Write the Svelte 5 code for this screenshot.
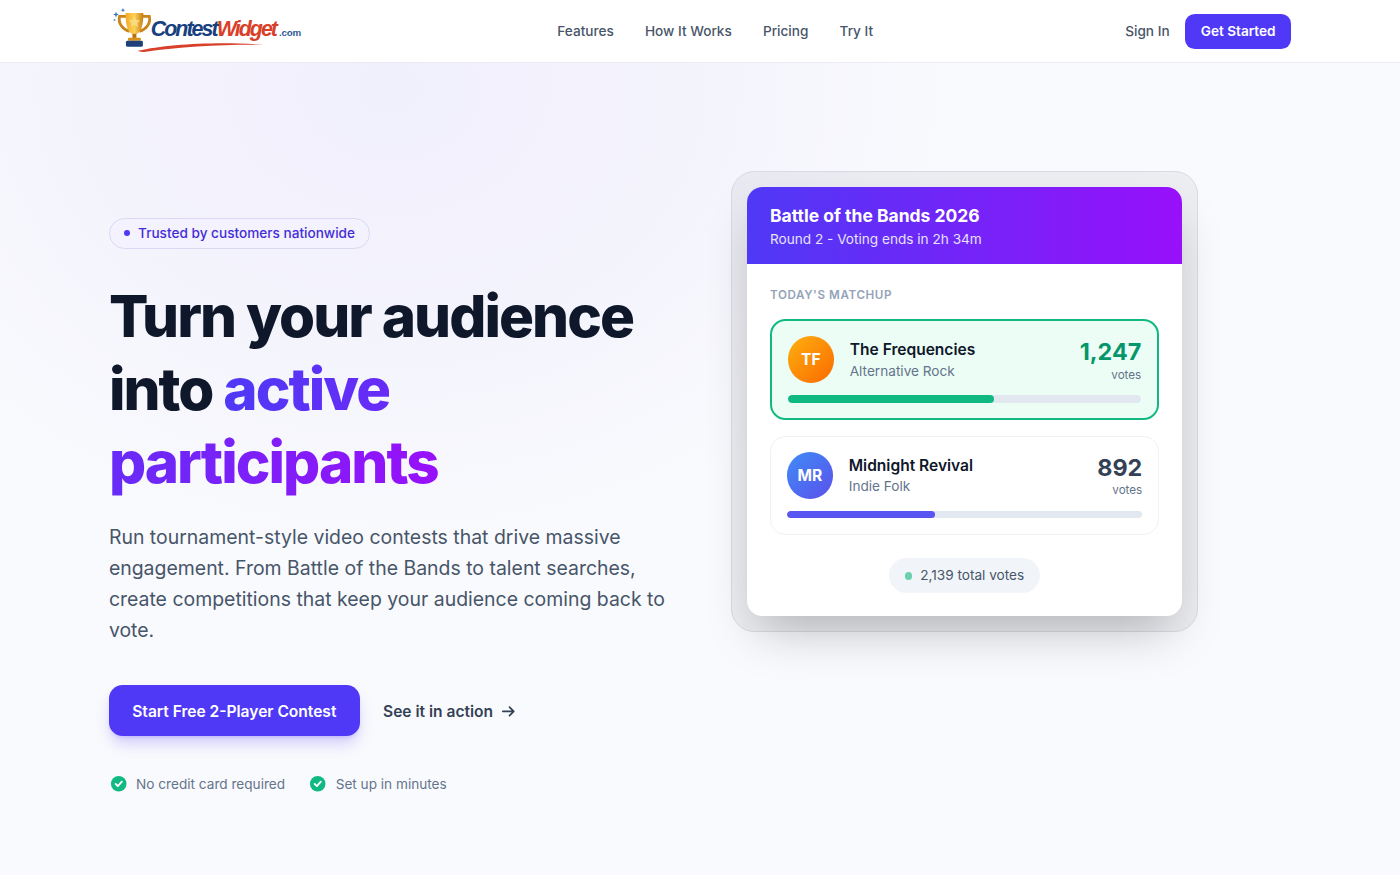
<script>
  const navLinks = ['Features', 'How It Works', 'Pricing', 'Try It'];
  const perks = ['No credit card required', 'Set up in minutes'];
  const contestants = [
    { initials: 'TF', name: 'The Frequencies', genre: 'Alternative Rock', votes: 1247, tone: 'orange', leader: true },
    { initials: 'MR', name: 'Midnight Revival', genre: 'Indie Folk', votes: 892, tone: 'blue', leader: false }
  ];
  const total = contestants.reduce((sum, c) => sum + c.votes, 0);
</script>

<div class="page">
  <header class="nav">
    <a class="logo" href="#top">
      <svg class="trophy" viewBox="0 0 40 42" width="41" height="43" aria-hidden="true">
        <path d="M3 3.500l.8 2.200 2.200.8-2.200.8L3 9.500l-.8-2.200L0 6.500l2.200-.8z" fill="#3c6fb0" />
        <path d="M10 0l.6 1.600 1.600.6-1.600.6-.6 1.600-.6-1.600-1.600-.6 1.600-.6z" fill="#3c6fb0" />
        <circle cx="1.500" cy="12" r="1" fill="#6d93c4" />
        <path d="M14 8.500H6.500c-1.500 7 3 13 10 15M29 8.500h7.500c1.500 7-3 13-10 15" fill="none" stroke="#c9851a" stroke-width="2.800" />
        <path d="M12.500 5h18c0 11-2 21-9 22-7-1-9-11-9-22z" fill="url(#cup)" />
        <path d="M21.500 8.500l1.700 3.600 3.900.5-2.900 2.700.8 3.900-3.500-2-3.500 2 .8-3.900-2.900-2.700 3.900-.5z" fill="#f9dc7f" />
        <rect x="19.500" y="26" width="4" height="5" fill="#b8720f" />
        <rect x="15" y="30" width="13" height="3" rx="1" fill="#d4921d" />
        <rect x="13" y="33" width="17" height="6" rx="1.500" fill="#1d3f7a" />
        <defs>
          <linearGradient id="cup" x1="0" x2="1" y1="0" y2="0">
            <stop offset="0" stop-color="#f4a927" />
            <stop offset="0.5" stop-color="#fbd25a" />
            <stop offset="1" stop-color="#c97d10" />
          </linearGradient>
        </defs>
      </svg>
      <span class="wordmark"><b>Contest</b><i>Widget</i><small>.com</small></span>
      <svg class="swoosh" viewBox="0 0 130 10" width="130" height="10" aria-hidden="true">
        <path d="M0 9C30 2 85-1 130 3 85 2.500 45 5 8 10 4 10.500 1 10 0 9z" fill="#d8402a" />
      </svg>
    </a>
    <nav class="links">
      {#each navLinks as link}
        <a href="#top">{link}</a>
      {/each}
    </nav>
    <div class="actions">
      <a class="signin" href="#top">Sign In</a>
      <a class="get-started" href="#top">Get Started</a>
    </div>
  </header>

  <main class="hero">
    <section class="copy">
      <div class="badge"><span class="badge-dot"></span>Trusted by customers nationwide</div>
      <h1>Turn your audience into <span class="accent">active participants</span></h1>
      <p class="lead">Run tournament-style video contests that drive massive engagement. From Battle of the Bands to talent searches, create competitions that keep your audience coming back to vote.</p>
      <div class="cta">
        <a class="primary" href="#top">Start Free 2-Player Contest</a>
        <a class="secondary" href="#top">See it in action
          <svg viewBox="0 0 24 24" width="15" height="15" fill="none" stroke="currentColor" stroke-width="2.800" stroke-linecap="round" stroke-linejoin="round" aria-hidden="true">
            <path d="M3 12h18M14 5l7 7-7 7" />
          </svg>
        </a>
      </div>
      <ul class="perks">
        {#each perks as perk}
          <li>
            <svg viewBox="0 0 20 20" width="20" height="20" aria-hidden="true">
              <circle cx="10" cy="10" r="8" fill="#10b981" />
              <path d="M6.800 10.200l2.300 2.300 4.100-4.600" fill="none" stroke="#fff" stroke-width="1.900" stroke-linecap="round" stroke-linejoin="round" />
            </svg>
            {perk}
          </li>
        {/each}
      </ul>
    </section>

    <aside class="demo">
      <div class="frame">
        <div class="card">
          <div class="card-head">
            <h2>Battle of the Bands 2026</h2>
            <p>Round 2 - Voting ends in 2h 34m</p>
          </div>
          <div class="card-body">
            <div class="label">TODAY'S MATCHUP</div>

            {#each contestants as c}
              <div class="contestant" class:leader={c.leader}>
                <div class="row">
                  <div class="avatar {c.tone}">{c.initials}</div>
                  <div class="who">
                    <strong>{c.name}</strong>
                    <span>{c.genre}</span>
                  </div>
                  <div class="count">
                    <strong>{c.votes.toLocaleString('en-US')}</strong>
                    <span>votes</span>
                  </div>
                </div>
                <div class="track"><div class="fill" style="width: {(c.votes / total) * 100}%"></div></div>
              </div>
            {/each}

            <div class="total-wrap">
              <div class="total"><span class="total-dot"></span>{total.toLocaleString('en-US')} total votes</div>
            </div>
          </div>
        </div>
      </div>
    </aside>
  </main>
</div>

<style>
  :global(body) {
    margin: 0;
    overflow: hidden;
    font-family: Inter, "Liberation Sans", sans-serif;
    background: #f9fafd;
    color: #0f172a;
  }

  a {
    text-decoration: none;
    color: inherit;
  }

  /* the design is a 1440x900 layout shown at 1400x875 */
  .page {
    width: 1440px;
    height: 900px;
    zoom: 0.97222;
    overflow: hidden;
    background:
      radial-gradient(ellipse 600px 480px at 400px 90px, rgba(124, 92, 246, 0.07), rgba(124, 92, 246, 0.045) 50%, rgba(124, 92, 246, 0.015) 80%, rgba(124, 92, 246, 0) 100%),
      #f9fafd;
  }

  /* top bar */
  .nav {
    height: 64px;
    display: flex;
    align-items: center;
    justify-content: space-between;
    padding: 0 112px;
    background: #fff;
    border-bottom: 1px solid #e9edf3;
  }

  .logo {
    position: relative;
    display: flex;
    align-items: center;
    width: 198px;
    height: 46px;
    margin-left: 4px;
    margin-top: -4px;
  }

  .trophy {
    flex: none;
  }

  .wordmark {
    margin-left: -2px;
    margin-top: 1px;
    font-family: "Liberation Sans", Arial, sans-serif;
    font-size: 22px;
    font-style: italic;
    font-weight: 700;
    letter-spacing: -2px;
    white-space: nowrap;
  }

  .wordmark b {
    color: #17407f;
  }

  .wordmark i {
    color: #d8402a;
  }

  .wordmark small {
    font-size: 10px;
    font-style: normal;
    letter-spacing: -0.200px;
    color: #2d5a96;
    margin-left: 3px;
  }

  .swoosh {
    position: absolute;
    left: 26px;
    top: 36px;
  }

  .links {
    display: flex;
    gap: 32px;
    font-size: 14px;
    font-weight: 500;
    color: #475569;
  }

  .actions {
    display: flex;
    align-items: center;
    gap: 16px;
    font-size: 14px;
    font-weight: 500;
  }

  .signin {
    color: #475569;
  }

  .get-started {
    padding: 8.5px 16px 7.5px;
    line-height: 20px;
    border-radius: 10px;
    background: #4f39f6;
    color: #fff;
    font-weight: 600;
  }

  /* hero */
  .hero {
    display: grid;
    grid-template-columns: 576px 576px;
    gap: 64px;
    padding: 0 112px;
  }

  .copy {
    padding-top: 159px;
  }

  .badge {
    display: inline-flex;
    align-items: center;
    padding: 5px 14.500px 5px 15px;
    line-height: 20px;
    border: 1px solid #d9d9f3;
    border-radius: 16px;
    background: #f3f2fe;
    font-size: 14px;
    font-weight: 500;
    color: #432dd7;
  }

  .badge-dot {
    width: 6px;
    height: 6px;
    border-radius: 50%;
    background: #4f39f6;
    margin-right: 8px;
  }

  h1 {
    margin: 32px 0 0;
    font-size: 60px;
    line-height: 75px;
    font-weight: 800;
    letter-spacing: -2px;
    color: #0f172a;
  }

  .accent {
    background: linear-gradient(90deg, #4f39f6, #9810fa);
    -webkit-background-clip: text;
    background-clip: text;
    color: transparent;
  }

  .lead {
    margin: 24px 0 0;
    font-size: 20px;
    line-height: 32px;
    color: #475569;
  }

  .cta {
    display: flex;
    align-items: center;
    gap: 24px;
    margin-top: 40px;
  }

  .primary {
    padding: 14.500px 24px 13.500px;
    line-height: 24px;
    border-radius: 14px;
    background: #4f39f6;
    color: #fff;
    font-size: 16px;
    font-weight: 600;
    box-shadow: 0 10px 15px -3px rgba(79, 57, 246, 0.25), 0 4px 6px -4px rgba(79, 57, 246, 0.25);
  }

  .secondary {
    display: flex;
    align-items: center;
    gap: 8px;
    padding-top: 1px;
    font-size: 16px;
    font-weight: 600;
    color: #334155;
  }

  .perks {
    display: flex;
    gap: 24px;
    list-style: none;
    margin: 39px 0 0;
    padding: 0;
    font-size: 14px;
    color: #64748b;
  }

  .perks li {
    display: flex;
    align-items: center;
    gap: 8px;
  }

  /* demo card */
  .demo {
    padding-top: 111px;
  }

  .frame {
    width: 480px;
    box-sizing: border-box;
    padding: 15px;
    border: 1px solid #d8dbe1;
    border-radius: 24px;
    background: rgba(15, 23, 42, 0.05);
  }

  .card {
    border-radius: 16px;
    background: #fff;
    overflow: hidden;
    box-shadow: 0 25px 50px -12px rgba(0, 0, 0, 0.25);
  }

  .card-head {
    padding: 16px 24px;
    background: linear-gradient(90deg, #4f39f6, #9810fa);
    color: #fff;
  }

  .card-head h2 {
    margin: 0;
    font-size: 18px;
    line-height: 28px;
    font-weight: 700;
  }

  .card-head p {
    margin: 0;
    padding-top: 0.5px;
    font-size: 14px;
    line-height: 19.5px;
    color: #e6e2ff;
  }

  .card-body {
    padding: 24px;
  }

  .label {
    font-size: 12px;
    line-height: 16px;
    font-weight: 600;
    letter-spacing: 0.6px;
    color: #94a3b8;
  }

  .contestant {
    margin-top: 16px;
    padding: 16px;
    border: 1px solid #eef1f5;
    border-radius: 16px;
    background: #fff;
  }

  /* 2.1px so the zoomed border still lands on two device pixels */
  .contestant.leader {
    border: 2.100px solid #10b981;
    background: #ecfdf5;
  }

  .row {
    display: flex;
    align-items: center;
  }

  .avatar {
    flex: none;
    width: 48px;
    height: 48px;
    border-radius: 50%;
    display: flex;
    align-items: center;
    justify-content: center;
    color: #fff;
    font-size: 16px;
    font-weight: 700;
  }

  .orange {
    background: linear-gradient(135deg, #fdb00f, #fb6a00);
  }

  .blue {
    background: linear-gradient(135deg, #3f8cf6, #5b50ec);
  }

  .who {
    display: flex;
    flex-direction: column;
    margin-left: 16px;
    flex: 1;
  }

  .who strong {
    font-size: 16px;
    line-height: 24px;
    font-weight: 600;
    color: #0f172a;
  }

  .who span {
    font-size: 14px;
    line-height: 20px;
    color: #64748b;
  }

  .count {
    display: flex;
    flex-direction: column;
    align-items: flex-end;
  }

  .count strong {
    font-size: 24px;
    line-height: 32px;
    font-weight: 700;
    color: #334155;
  }

  .leader .count strong {
    color: #059669;
  }

  .count span {
    font-size: 12px;
    line-height: 16px;
    color: #64748b;
  }

  .track {
    height: 8px;
    margin-top: 12px;
    border-radius: 4px;
    background: #e2e8f0;
    overflow: hidden;
  }

  .fill {
    height: 100%;
    border-radius: 4px;
    background: #5855f0;
  }

  .leader .fill {
    background: #10b981;
  }

  .total-wrap {
    display: flex;
    justify-content: center;
    margin-top: 24px;
  }

  .total {
    display: flex;
    align-items: center;
    gap: 8px;
    padding: 8px 16px;
    line-height: 20px;
    border-radius: 18px;
    background: #f1f5f9;
    font-size: 14px;
    color: #475569;
  }

  .total-dot {
    width: 8px;
    height: 8px;
    border-radius: 50%;
    background: #6ad0ae;
  }
</style>
